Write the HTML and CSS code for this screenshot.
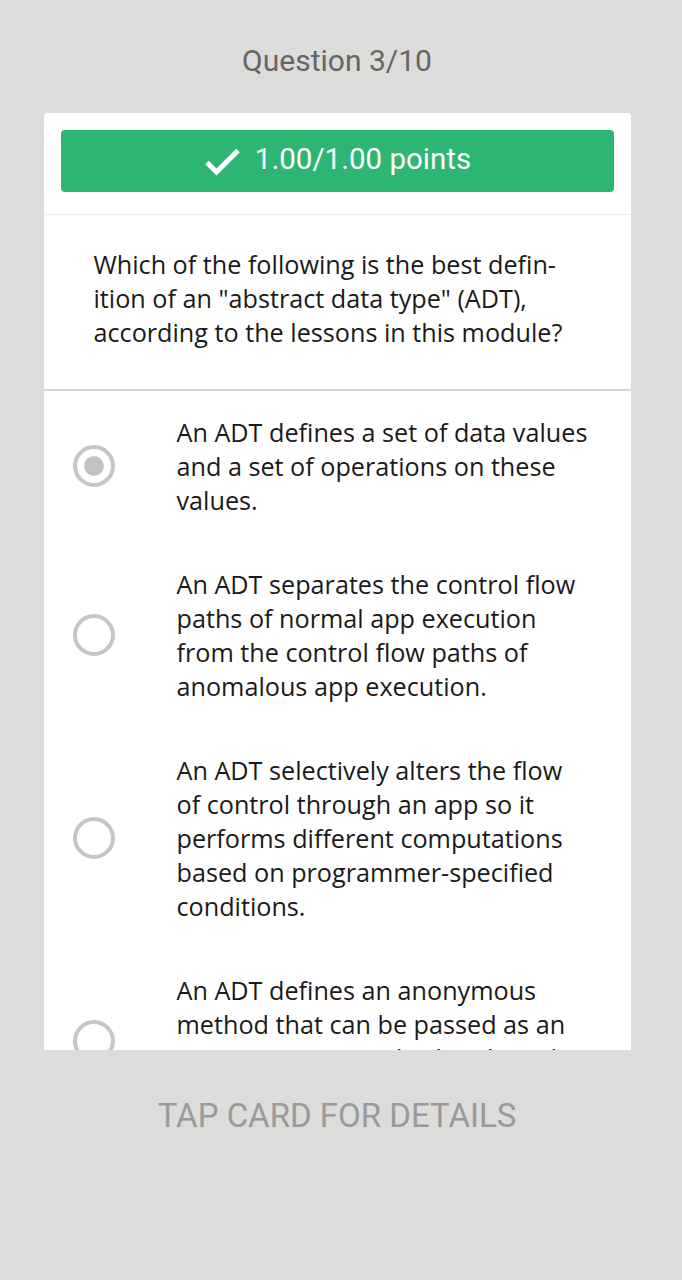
FILE: index.html
```html
<!DOCTYPE html>
<html>
<head>
<meta charset="utf-8">
<link rel="stylesheet" href="styles.css">
</head>
<body>
<div class="screen">
  <div class="qnum">Question 3/10</div>
  <div class="card">
    <div class="card-head">
      <div class="score">
        <svg class="check" width="40" height="30" viewBox="0 0 40 30"><path d="M4 15.5 L13.5 25 L35 3.5" fill="none" stroke="#fff" stroke-width="5"/></svg>
        <span class="pts">1.00/1.00 points</span>
      </div>
    </div>
    <div class="question">Which of the following is the best defin-<br>ition of an "abstract data type" (ADT),<br>according to the lessons in this module?</div>
    <div class="options">
      <div class="option">
        <div class="radio selected"><span class="dot"></span></div>
        <div class="otext">An ADT defines a set of data values and a set of operations on these values.</div>
      </div>
      <div class="option">
        <div class="radio"></div>
        <div class="otext">An ADT separates the control flow paths of normal app execution from the control flow paths of anomalous app execution.</div>
      </div>
      <div class="option">
        <div class="radio"></div>
        <div class="otext">An ADT selectively alters the flow of control through an app so it performs different computations based on programmer-specified conditions.</div>
      </div>
      <div class="option">
        <div class="radio"></div>
        <div class="otext">An ADT defines an anonymous method that can be passed as an argument to a method and used as a value.</div>
      </div>
    </div>
  </div>
  <div class="tap">TAP CARD FOR DETAILS</div>
</div>
</body>
</html>
```
FILE: styles.css
```css
html, body {
  margin: 0;
  padding: 0;
  background: #dcdcdb;
}
.screen {
  width: 674px;
  height: 1280px;
  display: flex;
  flex-direction: column;
  align-items: center;
}
.qnum {
  font-family: Roboto, sans-serif;
  font-size: 30px;
  color: #666666;
  height: 40px;
  line-height: 40px;
  margin-top: 41px;
}
.card {
  margin-top: 32px;
  width: 587px;
  height: 937px;
  background: #ffffff;
  border-radius: 3px 3px 0 0;
  overflow: hidden;
}
.card-head {
  padding: 17px 17px 0 17px;
  height: 84px;
  border-bottom: 1px solid #ececec;
}
.score {
  height: 62px;
  background: #2db673;
  border-radius: 4px;
  display: flex;
  align-items: center;
  justify-content: center;
  gap: 12px;
  font-family: Roboto, sans-serif;
  font-size: 29.5px;
  color: #ffffff;
}
.check {
  margin-top: 2px;
}
.pts {
  margin-bottom: 5px;
}
.question {
  font-family: "Open Sans", sans-serif;
  font-size: 25.2px;
  line-height: 34px;
  color: #1a1a1a;
  padding: 32px 40px 40px 50px;
  border-bottom: 2px solid #d6d6d6;
}
.options {
  padding-top: 24px;
  display: flex;
  flex-direction: column;
  gap: 50px;
}
.option {
  display: flex;
  align-items: center;
}
.radio {
  box-sizing: border-box;
  width: 42px;
  height: 42px;
  border: 4px solid #c6c6c6;
  border-radius: 50%;
  margin-left: 29px;
  margin-right: 62px;
  flex: none;
  display: flex;
  align-items: center;
  justify-content: center;
}
.dot {
  width: 20px;
  height: 20px;
  border-radius: 50%;
  background: #c2c2c2;
}
.otext {
  width: 413px;
  font-family: "Open Sans", sans-serif;
  font-size: 25.2px;
  line-height: 34px;
  color: #1a1a1a;
}
.tap {
  margin-top: 46px;
  font-family: Roboto, sans-serif;
  font-size: 33px;
  color: #9a9a9a;
  height: 40px;
  line-height: 40px;
}
```
